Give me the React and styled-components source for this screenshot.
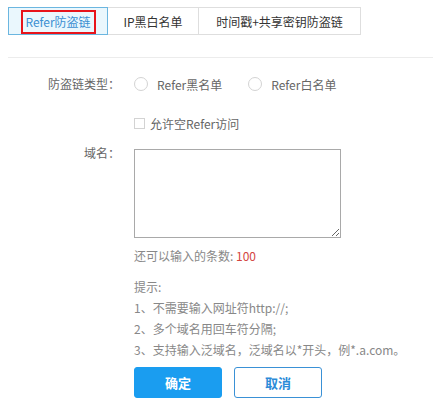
import React from "react";
import styled, { createGlobalStyle } from "styled-components";

const Global = createGlobalStyle`
  html, body { margin: 0; padding: 0; background: #fff; }
  body { font-family: "Noto Sans CJK SC", "Microsoft YaHei", sans-serif; font-size: 12px; color: #666; overflow: hidden; }
  * { box-sizing: border-box; }
`;

const Page = styled.div`
  padding: 7px 0 0 8px;
  width: 433px;
`;

const Tabs = styled.div`
  display: flex;
  height: 28px;
`;

const Tab = styled.div`
  position: relative;
  width: ${(p) => p.w}px;
  display: flex;
  align-items: center;
  justify-content: center;
  font-size: 12px;
  color: ${(p) => (p.active ? "#3b8fd2" : "#333")};
  background: ${(p) => (p.active ? "#eaf7fd" : "#fff")};
  border: 1px solid ${(p) => (p.active ? "#6bb6e0" : "#dedede")};
  margin-left: ${(p) => (p.first ? 0 : -1)}px;
  z-index: ${(p) => (p.active ? 1 : 0)};
`;

const Highlight = styled.span`
  position: absolute;
  left: 12px;
  top: 2px;
  width: 75px;
  height: 24px;
  border: 2px solid #e8141b;
`;

const Divider = styled.div`
  height: 1px;
  background: #ececec;
  margin-top: 22px;
`;

const Form = styled.div`
  display: grid;
  grid-template-columns: 112px 1fr;
  column-gap: 14px;
  padding-top: 16px;
`;

const Label = styled.div`
  text-align: right;
  color: #666;
  line-height: ${(p) => p.lh || 20}px;
  margin-top: ${(p) => p.mt || 0}px;
`;

const Field = styled.div`
  display: flex;
  flex-direction: column;
  margin-top: ${(p) => p.mt || 0}px;
`;

const RadioRow = styled.div`
  display: flex;
  align-items: center;
  height: 20px;
  gap: 26px;
`;

const Option = styled.label`
  display: flex;
  align-items: center;
  gap: 9px;
  color: #666;
`;

const Circle = styled.span`
  width: 14px;
  height: 14px;
  border-radius: 50%;
  border: 1px solid #d3d3d3;
  background: #fff;
`;

const Box = styled.span`
  width: 11px;
  height: 11px;
  border: 1px solid #d3d3d3;
  background: #fff;
`;

const CheckRow = styled.label`
  display: flex;
  align-items: center;
  height: 20px;
  gap: 5px;
  color: #666;
`;

const Area = styled.textarea`
  width: 207px;
  height: 89px;
  border: 1px solid #a9a9a9;
  border-radius: 0;
  margin: 0;
  padding: 2px;
  font: inherit;
  display: block;
`;

const Count = styled.div`
  line-height: 16px;
  margin-top: 10px;
  color: #888;
`;

const Red = styled.span`
  color: #d4453f;
`;

const Hints = styled.div`
  margin-top: 12px;
  line-height: 21px;
  color: #888;
`;

const Buttons = styled.div`
  display: flex;
  gap: 12px;
  margin-top: 7px;
`;

const Button = styled.button`
  width: 88px;
  height: 31px;
  border-radius: 3px;
  font-family: inherit;
  font-size: 13px;
  font-weight: bold;
  padding: 0;
  cursor: pointer;
  background: ${(p) => (p.primary ? "#1a9df0" : "#fff")};
  color: ${(p) => (p.primary ? "#fff" : "#2c8bd8")};
  border: 1px solid ${(p) => (p.primary ? "#1a9df0" : "#3a91d6")};
`;

export default function App() {
  return (
    <Page>
      <Global />
      <Tabs>
        <Tab w={100} first active>
          Refer防盗链
          <Highlight />
        </Tab>
        <Tab w={92}>IP黑白名单</Tab>
        <Tab w={163}>时间戳+共享密钥防盗链</Tab>
      </Tabs>
      <Divider />
      <Form>
        <Label>防盗链类型：</Label>
        <Field>
          <RadioRow>
            <Option>
              <Circle />
              Refer黑名单
            </Option>
            <Option>
              <Circle />
              Refer白名单
            </Option>
          </RadioRow>
        </Field>
        <div />
        <Field mt={19}>
          <CheckRow>
            <Box />
            允许空Refer访问
          </CheckRow>
        </Field>
        <Label lh={16} mt={12}>域名：</Label>
        <Field mt={16}>
          <Area />
          <Count>
            还可以输入的条数: <Red>100</Red>
          </Count>
          <Hints>
            <div>提示:</div>
            <div>1、不需要输入网址符http://;</div>
            <div>2、多个域名用回车符分隔;</div>
            <div>3、支持输入泛域名，泛域名以*开头，例*.a.com。</div>
          </Hints>
          <Buttons>
            <Button primary>确定</Button>
            <Button>取消</Button>
          </Buttons>
        </Field>
      </Form>
    </Page>
  );
}
